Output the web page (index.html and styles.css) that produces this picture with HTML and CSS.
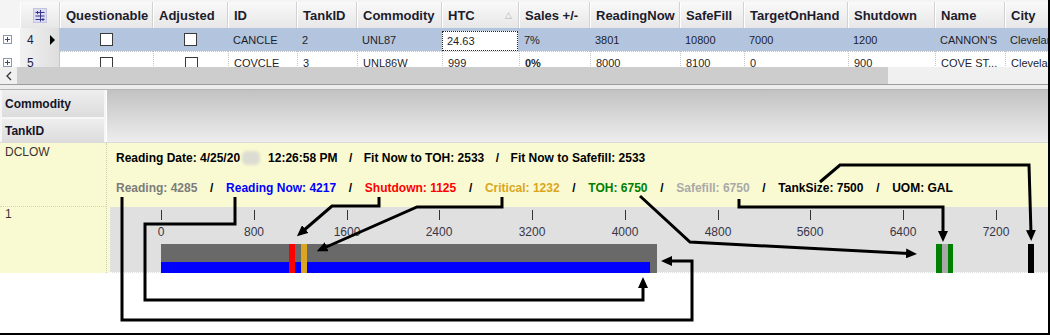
FILE: index.html
```html
<!DOCTYPE html>
<html lang="en">
<head>
    <meta charset="UTF-8">
    <title>Tank Readings</title>
    <link rel="stylesheet" href="styles.css">
</head>
<body>
<div class="window">
    <!-- Readings grid -->
    <div class="grid">
        <div class="grid-row grid-head">
            <div class="cell head-blank"></div>
            <div class="cell head-cell chooser">
                <svg width="14" height="15" viewBox="0 0 14 15">
                    <rect x="0.5" y="0.5" width="13" height="14" fill="#dcdcf2" stroke="#c4c4e0"/>
                    <path d="M2.5 4.5H11.5M2.5 8H11.5M2.5 11.5H11.5M7.5 2V13.5M4.5 3L4.5 6M10 10L10 13" stroke="#34348a" fill="none"/>
                </svg>
            </div>
            <div class="cell head-cell">Questionable</div>
            <div class="cell head-cell">Adjusted</div>
            <div class="cell head-cell">ID</div>
            <div class="cell head-cell">TankID</div>
            <div class="cell head-cell">Commodity</div>
            <div class="cell head-cell">HTC <span class="sort-glyph">&#9651;</span></div>
            <div class="cell head-cell">Sales +/-</div>
            <div class="cell head-cell">ReadingNow</div>
            <div class="cell head-cell">SafeFill</div>
            <div class="cell head-cell">TargetOnHand</div>
            <div class="cell head-cell">Shutdown</div>
            <div class="cell head-cell">Name</div>
            <div class="cell head-cell">City</div>
        </div>
        <div class="grid-body">
            <div class="grid-row data-row selected">
                <div class="cell expander-col"><span class="expander"></span></div>
                <div class="cell rowhead"><span>4</span><span class="current"></span></div>
                <div class="cell center"><span class="check"></span></div>
                <div class="cell center"><span class="check"></span></div>
                <div class="cell">CANCLE</div>
                <div class="cell">2</div>
                <div class="cell">UNL87</div>
                <div class="cell editing"><div class="editor">24.63</div></div>
                <div class="cell">7%</div>
                <div class="cell">3801</div>
                <div class="cell">10800</div>
                <div class="cell">7000</div>
                <div class="cell">1200</div>
                <div class="cell">CANNON'S</div>
                <div class="cell">Cleveland</div>
            </div>
            <div class="grid-row data-row plain">
                <div class="cell expander-col"><span class="expander"></span></div>
                <div class="cell rowhead"><span>5</span></div>
                <div class="cell center"><span class="check"></span></div>
                <div class="cell center"><span class="check"></span></div>
                <div class="cell">COVCLE</div>
                <div class="cell">3</div>
                <div class="cell">UNL86W</div>
                <div class="cell">999</div>
                <div class="cell bold">0%</div>
                <div class="cell">8000</div>
                <div class="cell">8100</div>
                <div class="cell">0</div>
                <div class="cell">900</div>
                <div class="cell">COVE ST...</div>
                <div class="cell">Cleveland</div>
            </div>
        </div>
        <div class="hscroll">
            <div class="scroll-btn">
                <svg width="8" height="10" viewBox="0 0 8 10"><path d="M6 1L2 5L6 9" stroke="#333" stroke-width="1.3" fill="none"/></svg>
            </div>
            <div class="scroll-thumb"></div>
            <div class="scroll-track"></div>
        </div>
    </div>

    <div class="splitter"></div>

    <!-- Pivot with tank gauge -->
    <div class="pivot">
        <div class="pivot-head">
            <div class="field-list">
                <div class="field">Commodity</div>
                <div class="field">TankID</div>
            </div>
            <div class="column-area"></div>
        </div>
        <div class="pivot-body">
            <div class="row-fields">
                <div class="row-value first">DCLOW</div>
                <div class="row-value second">1</div>
            </div>
            <div class="pivot-data">
                <div class="summary">
                    <div class="summary-line">
                        <span>Reading Date: 4/25/20<span class="redact"></span>12:26:58 PM</span>
                        <span class="sep">/</span>
                        <span>Fit Now to TOH: 2533</span>
                        <span class="sep">/</span>
                        <span>Fit Now to Safefill: 2533</span>
                    </div>
                    <div class="summary-line wide">
                        <span class="c-reading">Reading: 4285</span>
                        <span class="sep">/</span>
                        <span class="c-now">Reading Now: 4217</span>
                        <span class="sep">/</span>
                        <span class="c-shutdown">Shutdown: 1125</span>
                        <span class="sep">/</span>
                        <span class="c-critical">Critical: 1232</span>
                        <span class="sep">/</span>
                        <span class="c-toh">TOH: 6750</span>
                        <span class="sep">/</span>
                        <span class="c-safefill">Safefill: 6750</span>
                        <span class="sep">/</span>
                        <span>TankSize: 7500</span>
                        <span class="sep">/</span>
                        <span>UOM: GAL</span>
                    </div>
                </div>
                <div class="gauge">
                    <div class="tick" style="left:51px"><span>0</span></div>
                    <div class="tick" style="left:144px"><span>800</span></div>
                    <div class="tick" style="left:237px"><span>1600</span></div>
                    <div class="tick" style="left:329px"><span>2400</span></div>
                    <div class="tick" style="left:422px"><span>3200</span></div>
                    <div class="tick" style="left:515px"><span>4000</span></div>
                    <div class="tick" style="left:608px"><span>4800</span></div>
                    <div class="tick" style="left:700px"><span>5600</span></div>
                    <div class="tick" style="left:793px"><span>6400</span></div>
                    <div class="tick" style="left:886px"><span>7200</span></div>

                    <div class="bar bar-reading" style="left:51px; width:496px"></div>
                    <div class="bar bar-now" style="left:51px; width:489px"></div>
                    <div class="mark mark-shutdown" style="left:179px"></div>
                    <div class="mark mark-critical" style="left:191px"></div>
                    <div class="mark mark-toh" style="left:826px"><span class="mark-safefill"></span></div>
                    <div class="mark mark-size" style="left:918px"></div>
                </div>
            </div>
        </div>
    </div>

    <!-- callout arrows -->
    <svg class="callouts" width="1050" height="335" viewBox="0 0 1050 335">
        <defs>
            <marker id="head" markerWidth="11" markerHeight="10" refX="3" refY="5" orient="auto" markerUnits="userSpaceOnUse">
                <path d="M0 0L11 5L0 10Z" fill="#000"/>
            </marker>
        </defs>
        <g fill="none" stroke="#000" stroke-width="3" marker-end="url(#head)">
            <path d="M122 197V320H692V261H669"/>
            <path d="M235 197V224H145V300H643V285"/>
            <path d="M379 197V206H332L303 231"/>
            <path d="M502 197V207H417L324 248"/>
            <path d="M640 196L690 242L909 253.6"/>
            <path d="M739 199V207H943V234"/>
            <path d="M820 182L840 165H1029L1031 233"/>
        </g>
    </svg>
</div>
</body>
</html>
```

FILE: styles.css
```css
* {
    box-sizing: border-box;
}
body {
    margin: 0;
    font-family: "Liberation Sans", Arial, sans-serif;
    background: #fff;
}
.window {
    position: relative;
    width: 1050px;
    height: 335px;
    overflow: hidden;
    background: #fff;
    border-right: 2px solid #000;
    border-bottom: 2px solid #000;
}

/* top grid */
.grid {
    overflow: hidden;
    padding-top: 2px;
    background: #f4f4f4;
}
.grid-row {
    display: grid;
    grid-template-columns: 20px 40px 93px 75px 69px 60px 85px 77px 71px 90px 64px 104px 87px 70px 80px;
    width: 1085px;
}
.grid-head {
    height: 26px;
}
.cell {
    display: flex;
    align-items: center;
    white-space: nowrap;
    overflow: hidden;
}
.head-blank {
    background: #f4f4f4;
}
.head-cell {
    padding-left: 5px;
    font-size: 13px;
    font-weight: bold;
    color: #1c1c2c;
    background: linear-gradient(#f9f9f9, #e7e7e7);
    border-left: 1px solid #fff;
    border-right: 1px solid #d2d2d2;
}
.chooser {
    justify-content: center;
    padding-left: 0;
}
.sort-glyph {
    margin-left: auto;
    margin-right: 6px;
    font-family: "DejaVu Sans", sans-serif;
    font-size: 9px;
    font-weight: normal;
    color: #b4b4b4;
}
.grid-body {
    height: 39px;
    overflow: hidden;
    background: #fff;
}
.data-row {
    height: 23px;
    font-size: 11px;
    color: #1e1e2a;
}
.data-row .cell {
    padding-left: 5px;
}
.data-row .center {
    justify-content: center;
    padding-left: 0;
}
.selected {
    background: #b3c5de;
}
.plain .cell {
    border-top: 1px dotted #c4c4c4;
}
.plain .cell:nth-child(n+4) {
    border-left: 1px dotted #c4c4c4;
}
.data-row .expander-col {
    background: #fff;
    border: none;
    padding-left: 3px;
}
.expander {
    position: relative;
    width: 9px;
    height: 9px;
    border: 1px solid #8a98ae;
    background: #fff;
}
.expander::before,
.expander::after {
    content: "";
    position: absolute;
    background: #3a4a70;
}
.expander::before {
    left: 1px;
    top: 3px;
    width: 5px;
    height: 1px;
}
.expander::after {
    left: 3px;
    top: 1px;
    width: 1px;
    height: 5px;
}
.data-row .rowhead {
    justify-content: space-between;
    padding: 0 4px 0 7px;
    font-size: 12px;
    color: #20204a;
    background: linear-gradient(90deg, #f2f2f2, #dedede);
    border-right: 1px solid #c6c6c6;
    border-top: none;
}
.current {
    width: 0;
    height: 0;
    border-left: 5px solid #000;
    border-top: 5px solid transparent;
    border-bottom: 5px solid transparent;
}
.check {
    width: 13px;
    height: 13px;
    border: 1px solid #3a3a3a;
    background: #fff;
}
.editing {
    padding: 3px 1px 0 0 !important;
}
.editor {
    width: 100%;
    height: 100%;
    padding-left: 4px;
    display: flex;
    align-items: center;
    background: #fff;
    border: 1px dotted #222;
}
.bold {
    font-weight: bold;
}
.hscroll {
    display: flex;
    height: 17px;
}
.scroll-btn {
    width: 17px;
    display: flex;
    align-items: center;
    justify-content: center;
    background: #f0f0f0;
}
.scroll-thumb {
    width: 871px;
    background: #cdcdcd;
}
.scroll-track {
    flex: 1;
    background: #f0f0f0;
}
.splitter {
    height: 6px;
    background: #eeeeee;
    border-top: 1px solid #9c9c9c;
    border-bottom: 1px solid #b4b4b4;
}

/* pivot */
.pivot-head {
    display: flex;
    height: 53px;
    border-bottom: 1px solid #dadada;
}
.field-list {
    width: 107px;
    padding: 0 2px;
    background: #f6f6f6;
    border-right: 1px solid #fff;
}
.field {
    display: flex;
    align-items: center;
    padding-left: 3px;
    font-size: 12px;
    font-weight: bold;
    color: #14142a;
    background: linear-gradient(#eeeeee, #dcdcdc);
}
.field:first-child {
    height: 27px;
    margin-bottom: 2px;
}
.field:last-child {
    height: 23px;
}
.column-area {
    flex: 1;
    background: linear-gradient(#c2c2c2, #ededed);
}
.pivot-body {
    display: flex;
    height: 130px;
}
.row-fields {
    width: 107px;
    background: #fafad2;
    border-right: 1px dotted #cfcfb4;
}
.row-value {
    padding: 2px 5px 0;
    font-size: 12px;
    color: #3a3434;
}
.row-value.first {
    height: 64px;
    border-bottom: 1px dotted #d4d4c0;
}
.row-value.second {
    padding-top: 0;
}
.pivot-data {
    flex: 1;
    background: #fafad2;
}
.summary {
    height: 64px;
    padding: 8px 0 0 9px;
}
.summary-line {
    display: flex;
    gap: 11.5px;
    height: 14px;
    line-height: 14px;
    margin-bottom: 16px;
    font-size: 12px;
    font-weight: bold;
    color: #000;
    white-space: nowrap;
}
.summary-line.wide {
    gap: 12.7px;
}
.redact {
    display: inline-block;
    width: 18px;
    height: 14px;
    margin: 0 8px 0 2px;
    vertical-align: top;
    background: #dcdcd2;
    border-radius: 5px;
    filter: blur(1.5px);
}
.c-reading { color: #7c7c7c; }
.c-now { color: #0000ff; }
.c-shutdown { color: #ff0000; }
.c-critical { color: #daa520; }
.c-toh { color: #008000; }
.c-safefill { color: #a9a9a9; }

.gauge {
    position: relative;
    height: 66px;
    margin-left: 3px;
    background: #e0e0e0;
    border-bottom: 1px dotted #fff;
}
.tick {
    position: absolute;
    top: 3px;
    width: 1px;
    height: 10px;
    background: #333;
}
.tick span {
    position: absolute;
    top: 15px;
    left: 0;
    transform: translateX(-50%);
    font-size: 12px;
    line-height: 14px;
    color: #36364a;
}
.bar {
    position: absolute;
}
.bar-reading {
    top: 37px;
    height: 29px;
    background: #696969;
}
.bar-now {
    top: 55px;
    height: 11px;
    background: #0000ff;
}
.mark {
    position: absolute;
    top: 37px;
    width: 6px;
    height: 29px;
}
.mark-shutdown { background: #ff0000; }
.mark-critical { background: #daa520; }
.mark-size { background: #000; }
.mark-toh {
    width: 17px;
    display: flex;
    justify-content: center;
    background: #008000;
}
.mark-safefill {
    width: 6px;
    background: #a9a9a9;
}

.callouts {
    position: absolute;
    left: 0;
    top: 0;
    pointer-events: none;
}
```
